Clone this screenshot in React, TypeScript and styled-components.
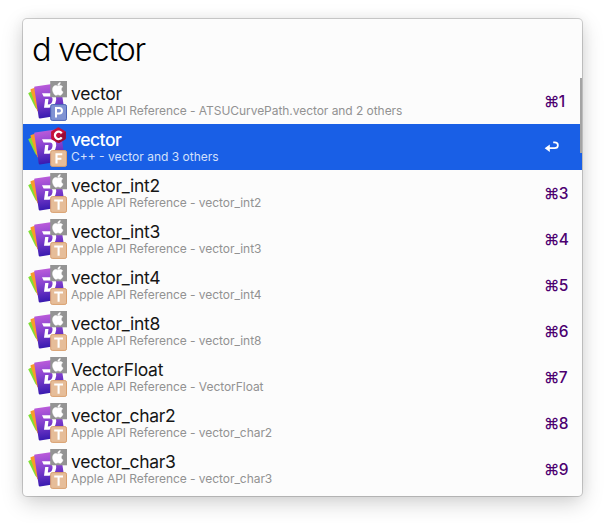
import React from "react";
import styled, { createGlobalStyle } from "styled-components";

const GlobalStyle = createGlobalStyle`
  html, body { margin: 0; height: 100%; background: #fff; overflow: hidden; }
  body { font-family: Inter, "Liberation Sans", sans-serif; -webkit-font-smoothing: antialiased; }
`;

const Desktop = styled.main`
  box-sizing: border-box;
  width: 605px;
  height: 523px;
  padding: 19px 0 0 23px;
`;

const Panel = styled.section`
  position: relative;
  width: 559px;
  height: 477px;
  border-radius: 4px;
  background: #fcfcfc;
  box-shadow: 0 0 0 1px rgba(0, 0, 0, 0.17), 0 7px 22px rgba(0, 0, 0, 0.18), 0 0 14px rgba(0, 0, 0, 0.06);
`;

const Query = styled.div`
  height: 59px;
  padding-left: 9px;
  font-size: 32.5px;
  font-weight: 350;
  line-height: 62px;
  letter-spacing: -1.35px;
  color: #000;
  white-space: pre;
`;

const List = styled.ul`
  margin: 0;
  padding: 0;
  list-style: none;
`;

const Row = styled.li<{ $selected: boolean }>`
  display: flex;
  align-items: center;
  box-sizing: border-box;
  height: 46px;
  padding-left: 5px;
  background: ${(p) => (p.$selected ? "#195fe6" : "transparent")};
`;

const Icon = styled.svg`
  flex: none;
  width: 40px;
  height: 40px;
`;

const Labels = styled.div`
  flex: 1;
  padding-left: 3px;
  white-space: nowrap;
`;

const Title = styled.div<{ $selected: boolean }>`
  height: 20px;
  line-height: 20px;
  font-size: 17.5px;
  letter-spacing: ${(p) => (p.$selected ? "-0.5px" : "-0.27px")};
  font-weight: ${(p) => (p.$selected ? 550 : 400)};
  color: ${(p) => (p.$selected ? "#fff" : "#161616")};
`;

const Subtitle = styled.div<{ $selected: boolean }>`
  height: 14px;
  line-height: 14px;
  font-size: 12px;
  letter-spacing: ${(p) => (p.$selected ? "0" : "-0.05px")};
  color: ${(p) => (p.$selected ? "#d3e0fb" : "#929292")};
`;

const Shortcut = styled.div`
  width: 38px;
  font-size: 15.5px;
  font-weight: 450;
  letter-spacing: -0.7px;
  color: #4c0070;
  white-space: nowrap;
`;

const ReturnIcon = styled.svg`
  display: block;
  width: 16px;
  height: 14px;
`;

const Scrollbar = styled.div`
  position: absolute;
  top: 59px;
  right: 0;
  width: 2px;
  height: 75px;
  background: #a4a4a4;
`;

type Source = "apple" | "cpp";
type Kind = "P" | "F" | "T";

const kindColors: Record<Kind, [string, string]> = {
  P: ["#8093d3", "#4c64b8"],
  F: ["#e6bd99", "#d9a06f"],
  T: ["#e6bd99", "#d9a06f"],
};

function DocIcon({ source, kind }: { source: Source; kind: Kind }) {
  const [fill, edge] = kindColors[kind];
  return (
    <Icon viewBox="0 0 40 40">
      <defs>
        <linearGradient id="card" x1="0" y1="0" x2="0.15" y2="1">
          <stop offset="0" stopColor="#c862dc" />
          <stop offset="0.5" stopColor="#8742d0" />
          <stop offset="1" stopColor="#3a1bb0" />
        </linearGradient>
      </defs>
      <path d="M0.2 12.2 L7 8 L10 29 L7.5 27Z" fill="#80e035" />
      <path d="M2.5 9 Q2.4 8.2 3.2 8 L9 6 L11 31 L9.3 30Z" fill="#f99a2b" />
      <path
        d="M6.2 6.6 Q6.1 5.7 7 5.5 L31 2 Q32.2 1.8 32.5 3 L37 33.5 L12 37.4 Q10.9 37.5 10.7 36.5Z"
        fill="url(#card)"
      />
      <path
        d="M14 12.2 H22.5 Q28.8 12.6 28.2 18.8 Q27.2 26.6 20.6 26.8 H16 L17.2 18 H20.5 L19.8 23.6 Q23.9 23.5 24.5 19.2 Q24.9 15.6 22 15.5 H15.6Z"
        fill="#fff"
      />
      {source === "apple" ? (
        <>
          <rect x="22.2" width="16.8" height="16.3" fill="#949494" />
          <path
            transform="translate(24.1 1.5) scale(0.54)"
            d="M17.05 12.54c-.03-3.02 2.47-4.47 2.58-4.54-1.4-2.05-3.59-2.34-4.37-2.37-1.86-.19-3.63 1.1-4.58 1.1-.94 0-2.4-1.07-3.94-1.04-2.03.03-3.9 1.18-4.95 3-2.11 3.66-.54 9.08 1.52 12.05 1 1.45 2.2 3.08 3.78 3.02 1.51-.06 2.08-.98 3.91-.98s2.34.98 3.94.95c1.63-.03 2.66-1.48 3.66-2.94 1.15-1.69 1.63-3.32 1.66-3.41-.04-.01-3.18-1.22-3.21-4.84M14.04 3.68c.83-1.01 1.4-2.42 1.24-3.82-1.2.05-2.66.8-3.52 1.81-.77.89-1.45 2.32-1.27 3.69 1.34.1 2.71-.68 3.55-1.68"
            fill="#fff"
            stroke="#fff"
            strokeWidth="0.8"
          />
        </>
      ) : (
        <>
          <path
            d="M31 0.5 L37 4 Q37.8 4.5 37.8 5.3 V11 Q37.8 11.9 37 12.4 L31 15.9 Q30.4 16.2 29.8 15.9 L23.8 12.4 Q23.1 11.9 23.1 11 V5.3 Q23.1 4.5 23.8 4 L29.8 0.5 Q30.4 0.2 31 0.5Z"
            fill="#c50f3b"
          />
          <path d="M37.5 4.6 Q37.8 5 37.8 5.3 V11 Q37.8 11.9 37 12.4 L31 15.9 L27 13Z" fill="#960d36" />
          <path d="M33.7 6.3 A3.7 3.7 0 1 0 33.7 10.4" fill="none" stroke="#fff" strokeWidth="2.2" />
        </>
      )}
      <rect x="22.7" y="23.6" width="15.8" height="15.8" rx="1.6" fill={fill} stroke={edge} />
      {kind === "P" && (
        <path d="M28 36.5 V27 H31.2 Q34 27 34 29.8 Q34 32.5 31.2 32.5 H28" fill="none" stroke="#fff" strokeWidth="2" />
      )}
      {kind === "F" && <path d="M28.5 36.5 V27.2 H34.3 M28.5 31.7 H33.4" fill="none" stroke="#fff" strokeWidth="2.1" />}
      {kind === "T" && <path d="M26.2 27.5 H35 M30.6 27.5 V36.7" fill="none" stroke="#fff" strokeWidth="2.1" />}
    </Icon>
  );
}

interface Result {
  title: string;
  subtitle: string;
  source?: Source;
  kind?: Kind;
}

const results: Result[] = [
  { title: "vector", subtitle: "Apple API Reference - ATSUCurvePath.vector and 2 others", kind: "P" },
  { title: "vector", subtitle: "C++ - vector and 3 others", source: "cpp", kind: "F" },
  ...["vector_int2", "vector_int3", "vector_int4", "vector_int8", "VectorFloat", "vector_char2", "vector_char3"].map(
    (title) => ({ title, subtitle: `Apple API Reference - ${title}` }),
  ),
];

const selectedIndex = 1;

export default function App() {
  return (
    <>
      <GlobalStyle />
      <Desktop>
        <Panel>
          <Query>d vector</Query>
          <List>
            {results.map((r, i) => {
              const selected = i === selectedIndex;
              return (
                <Row key={i} $selected={selected}>
                  <DocIcon source={r.source ?? "apple"} kind={r.kind ?? "T"} />
                  <Labels>
                    <Title $selected={selected}>{r.title}</Title>
                    <Subtitle $selected={selected}>{r.subtitle}</Subtitle>
                  </Labels>
                  <Shortcut>
                    {selected ? (
                      <ReturnIcon viewBox="0 0 16 14">
                        <path d="M5.8 4.4 V12 L0.7 8.2Z" fill="#fff" />
                        <path
                          d="M4 8.2 H10.6 Q13.9 8.2 13.9 5.2 Q13.9 2.4 10.6 2.4 H9.2"
                          fill="none"
                          stroke="#fff"
                          strokeWidth="1.7"
                        />
                      </ReturnIcon>
                    ) : (
                      `⌘${i + 1}`
                    )}
                  </Shortcut>
                </Row>
              );
            })}
          </List>
          <Scrollbar />
        </Panel>
      </Desktop>
    </>
  );
}
